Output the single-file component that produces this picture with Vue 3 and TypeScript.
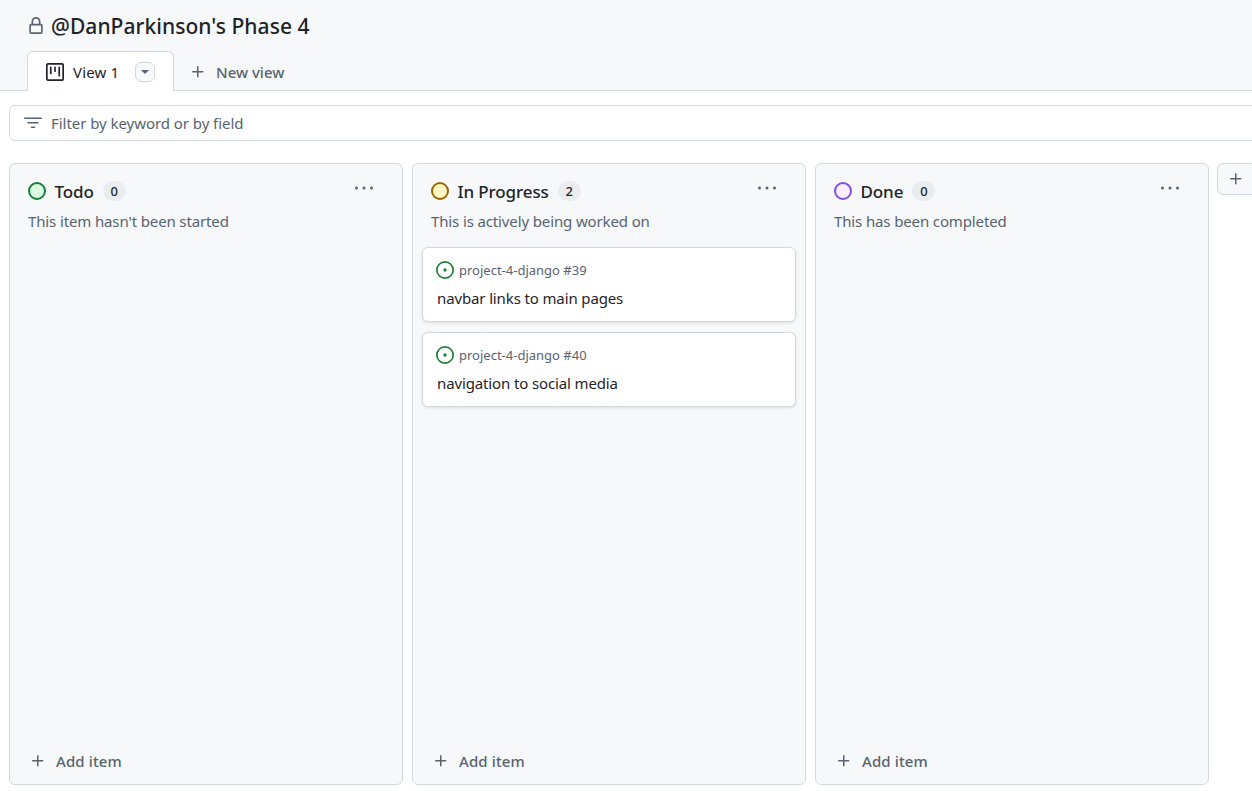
<script setup lang="ts">
interface Card {
  repo: string
  number: number
  title: string
}

interface Column {
  name: string
  description: string
  stroke: string
  fill: string
  cards: Card[]
}

const columns: Column[] = [
  { name: 'Todo', description: "This item hasn't been started", stroke: '#1a7f37', fill: '#dafbe1', cards: [] },
  {
    name: 'In Progress',
    description: 'This is actively being worked on',
    stroke: '#9a6700',
    fill: '#fff8c5',
    cards: [
      { repo: 'project-4-django', number: 39, title: 'navbar links to main pages' },
      { repo: 'project-4-django', number: 40, title: 'navigation to social media' },
    ],
  },
  { name: 'Done', description: 'This has been completed', stroke: '#8250df', fill: '#fbefff', cards: [] },
]
</script>

<template>
  <div class="page">
    <header class="top">
      <div class="title-row">
        <svg class="lock" width="18" height="18" viewBox="0 0 16 16" fill="#59636e">
          <path d="M4 4a4 4 0 0 1 8 0v2h.25c.966 0 1.75.784 1.75 1.75v5.5A1.75 1.75 0 0 1 12.25 15h-8.5A1.75 1.75 0 0 1 2 13.25v-5.5C2 6.784 2.784 6 3.75 6H4Zm6.5 2V4a2.5 2.5 0 1 0-5 0v2ZM3.5 7.75v5.5c0 .138.112.25.25.25h8.5a.25.25 0 0 0 .25-.25v-5.5a.25.25 0 0 0-.25-.25h-8.5a.25.25 0 0 0-.25.25Z" />
        </svg>
        <h1>@DanParkinson's Phase 4</h1>
      </div>
      <nav class="tabs">
        <div class="tab">
          <svg width="18" height="18" viewBox="0 0 16 16" fill="#1f2328">
            <path d="M0 1.75C0 .784.784 0 1.75 0h12.5C15.216 0 16 .784 16 1.75v12.5A1.75 1.75 0 0 1 14.25 16H1.75A1.75 1.75 0 0 1 0 14.25Zm1.75-.25a.25.25 0 0 0-.25.25v12.5c0 .138.112.25.25.25h12.5a.25.25 0 0 0 .25-.25V1.75a.25.25 0 0 0-.25-.25ZM11.75 3a.75.75 0 0 1 .75.75v7.5a.75.75 0 0 1-1.5 0v-7.5a.75.75 0 0 1 .75-.75Zm-8.25.75a.75.75 0 0 1 1.5 0v5.5a.75.75 0 0 1-1.5 0ZM8 3a.75.75 0 0 1 .75.75v3.5a.75.75 0 0 1-1.5 0v-3.5A.75.75 0 0 1 8 3Z" />
          </svg>
          <span>View 1</span>
          <span class="caret-btn"><i class="caret"></i></span>
        </div>
        <div class="new-view">
          <svg width="16" height="16" viewBox="0 0 16 16" fill="#59636e">
            <path d="M7.75 2a.75.75 0 0 1 .75.75V7h4.25a.75.75 0 0 1 0 1.5H8.5v4.25a.75.75 0 0 1-1.5 0V8.5H2.75a.75.75 0 0 1 0-1.5H7V2.75A.75.75 0 0 1 7.75 2Z" />
          </svg>
          <span>New view</span>
        </div>
      </nav>
    </header>

    <div class="filter">
      <svg width="18" height="18" viewBox="0 0 16 16" fill="#59636e">
        <path d="M.75 3h14.5a.75.75 0 0 1 0 1.5H.75a.75.75 0 0 1 0-1.5ZM3 7.75A.75.75 0 0 1 3.75 7h8.5a.75.75 0 0 1 0 1.5h-8.5A.75.75 0 0 1 3 7.75Zm3 4a.75.75 0 0 1 .75-.75h2.5a.75.75 0 0 1 0 1.5h-2.5a.75.75 0 0 1-.75-.75Z" />
      </svg>
      <span>Filter by keyword or by field</span>
    </div>

    <main class="board">
      <section v-for="col in columns" :key="col.name" class="column">
        <div class="col-head">
          <svg class="status" width="20" height="20" viewBox="0 0 20 20">
            <circle cx="10" cy="10" r="8" :fill="col.fill" :stroke="col.stroke" stroke-width="2" />
          </svg>
          <h2>{{ col.name }}</h2>
          <span class="count">{{ col.cards.length }}</span>
          <svg class="more" width="20" height="16" viewBox="0 0 20 16" fill="#59636e">
            <circle cx="2.5" cy="8" r="1.5" />
            <circle cx="10" cy="8" r="1.5" />
            <circle cx="17.5" cy="8" r="1.5" />
          </svg>
        </div>
        <p class="desc">{{ col.description }}</p>

        <div class="cards">
          <article v-for="card in col.cards" :key="card.number" class="card">
            <div class="card-meta">
              <svg width="18" height="18" viewBox="0 0 16 16" fill="#1a7f37">
                <path d="M8 9.5a1.5 1.5 0 1 0 0-3 1.5 1.5 0 0 0 0 3Z" />
                <path d="M8 0a8 8 0 1 1 0 16A8 8 0 0 1 8 0ZM1.5 8a6.5 6.5 0 1 0 13 0 6.5 6.5 0 0 0-13 0Z" />
              </svg>
              <span>{{ card.repo }} #{{ card.number }}</span>
            </div>
            <div class="card-title">{{ card.title }}</div>
          </article>
        </div>

        <div class="add-item">
          <svg width="16" height="16" viewBox="0 0 16 16" fill="#59636e">
            <path d="M7.75 2a.75.75 0 0 1 .75.75V7h4.25a.75.75 0 0 1 0 1.5H8.5v4.25a.75.75 0 0 1-1.5 0V8.5H2.75a.75.75 0 0 1 0-1.5H7V2.75A.75.75 0 0 1 7.75 2Z" />
          </svg>
          <span>Add item</span>
        </div>
      </section>

      <div class="add-column">
        <svg width="16" height="16" viewBox="0 0 16 16" fill="#59636e">
          <path d="M7.75 2a.75.75 0 0 1 .75.75V7h4.25a.75.75 0 0 1 0 1.5H8.5v4.25a.75.75 0 0 1-1.5 0V8.5H2.75a.75.75 0 0 1 0-1.5H7V2.75A.75.75 0 0 1 7.75 2Z" />
        </svg>
      </div>
    </main>
  </div>
</template>

<style>
html,
body {
  margin: 0;
  overflow: hidden;
  background: #fff;
}
</style>

<style scoped>
.page {
  width: 1252px;
  height: 791px;
  overflow: hidden;
  font-family: "Noto Sans", "Open Sans", sans-serif;
  color: #1f2328;
}

.top {
  height: 91px;
  box-sizing: border-box;
  background: #f6f8fa;
  border-bottom: 1px solid #d1d9e0;
  padding: 12px 0 0 27px;
}

.title-row {
  display: flex;
  align-items: center;
  height: 28px;
  gap: 6px;
}

.lock {
  margin-top: -1px;
}

h1 {
  margin: 0;
  font-size: 21px;
  font-weight: 500;
  letter-spacing: 0.05px;
}

.tabs {
  display: flex;
  margin: 11px 0 0 0;
}

.tab {
  width: 147px;
  height: 40px;
  box-sizing: border-box;
  background: #fff;
  border: 1px solid #d1d9e0;
  border-bottom: 0;
  border-radius: 6px 6px 0 0;
  display: flex;
  align-items: center;
  padding-left: 18px;
  gap: 9px;
  font-size: 15px;
  letter-spacing: 0.15px;
  color: #1f2328;
}

.caret-btn {
  width: 20px;
  height: 20px;
  box-sizing: border-box;
  margin-left: 7px;
  border: 1px solid #d1d9e0;
  border-radius: 6px;
  background: #f6f8fa;
  display: flex;
  align-items: center;
  justify-content: center;
}

.caret {
  width: 0;
  height: 0;
  border-left: 4px solid transparent;
  border-right: 4px solid transparent;
  border-top: 4px solid #59636e;
  margin-top: 1px;
}

.new-view {
  display: flex;
  align-items: center;
  height: 40px;
  box-sizing: border-box;
  padding: 1px 0 0 16px;
  gap: 10px;
  font-size: 15px;
  font-weight: 500;
  color: #59636e;
}

.filter {
  margin: 14px 0 0 9px;
  width: 1260px;
  height: 36px;
  box-sizing: border-box;
  border: 1px solid #d1d9e0;
  border-radius: 6px;
  display: flex;
  align-items: center;
  padding-left: 14px;
  gap: 9px;
  font-size: 15px;
  letter-spacing: -0.05px;
  color: #59636e;
}

.board {
  display: flex;
  align-items: flex-start;
  gap: 9.5px;
  margin: 22px 0 0 9px;
}

.column {
  flex: none;
  width: 393.5px;
  height: 622px;
  box-sizing: border-box;
  background: #f6f8fa;
  border: 1px solid #d1d9e0;
  border-radius: 6px;
  display: flex;
  flex-direction: column;
}

.col-head {
  display: flex;
  align-items: center;
  height: 24px;
  margin-top: 15px;
  padding: 0 28px 0 17px;
}

.status {
  margin-right: 7.5px;
  flex: none;
}

h2 {
  margin: 0;
  font-size: 17px;
  font-weight: 500;
  letter-spacing: -0.1px;
}

.count {
  margin-left: 9px;
  min-width: 23px;
  height: 20px;
  border-radius: 10px;
  background: #eaedf0;
  font-size: 13px;
  font-weight: 500;
  line-height: 20px;
  text-align: center;
}

.more {
  margin: -6px 0 0 auto;
}

.desc {
  margin: 8px 0 0;
  padding: 0 18px;
  font-size: 15px;
  line-height: 20px;
  letter-spacing: -0.13px;
  color: #59636e;
}

.cards {
  flex: 1;
  display: flex;
  flex-direction: column;
  gap: 10px;
  padding: 16px 9px 0;
}

.card {
  height: 75px;
  box-sizing: border-box;
  background: #fff;
  border: 1px solid #d1d9e0;
  border-radius: 6px;
  box-shadow: 0 1px 3px rgba(31, 35, 40, 0.12);
  padding: 12px 13px 0;
}

.card-meta {
  display: flex;
  align-items: center;
  gap: 5px;
  height: 20px;
  font-size: 13px;
  color: #59636e;
}

.card-title {
  margin: 8px 0 0 1px;
  font-size: 15px;
  line-height: 20px;
  letter-spacing: -0.13px;
}

.add-item {
  display: flex;
  align-items: center;
  height: 20px;
  margin-bottom: 13px;
  padding: 0 20px;
  gap: 10px;
  font-size: 15px;
  font-weight: 500;
  letter-spacing: 0.1px;
  color: #59636e;
}

.add-column {
  flex: none;
  width: 40px;
  height: 32px;
  margin-left: -1px;
  box-sizing: border-box;
  background: #f6f8fa;
  border: 1px solid #d1d9e0;
  border-radius: 6px;
  display: flex;
  align-items: center;
  padding-left: 10px;
}
</style>
